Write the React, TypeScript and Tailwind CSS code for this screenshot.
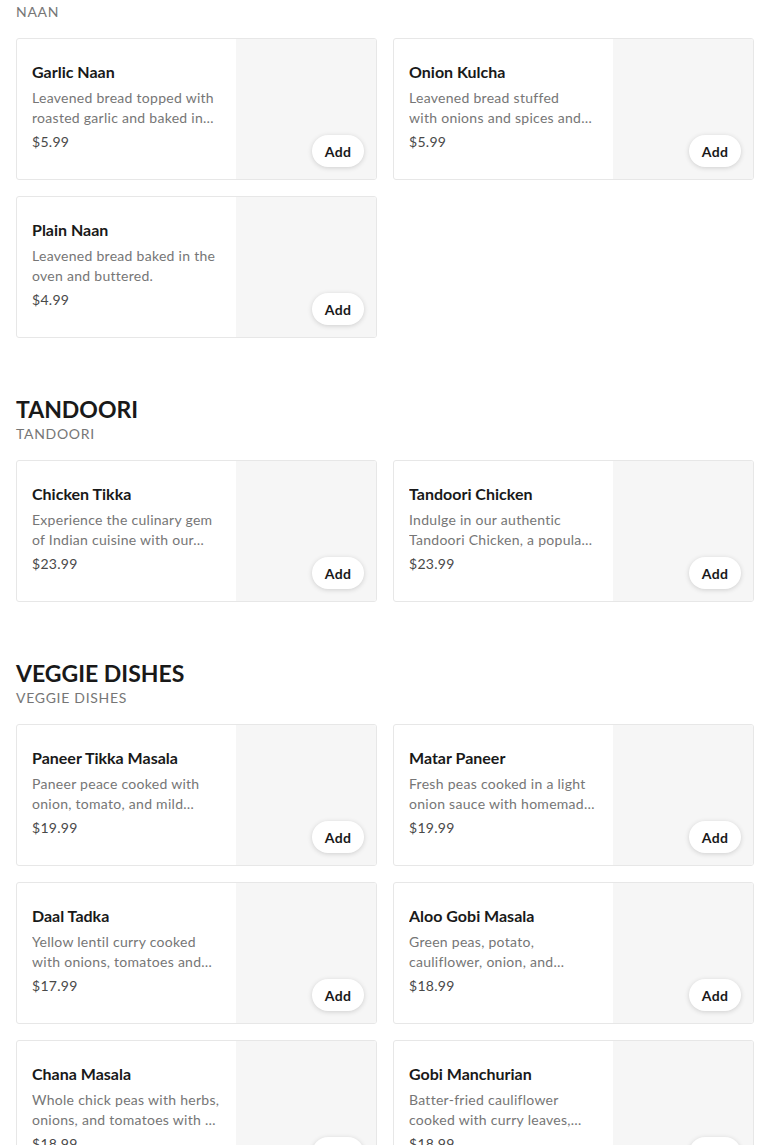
type Item = { name: string; lines: [string, string]; price: string };
type Section = { title: string; items: Item[] };

const sections: Section[] = [
  {
    title: "NAAN",
    items: [
      { name: "Garlic Naan", lines: ["Leavened bread topped with", "roasted garlic and baked in…"], price: "$5.99" },
      { name: "Onion Kulcha", lines: ["Leavened bread stuffed", "with onions and spices and…"], price: "$5.99" },
      { name: "Plain Naan", lines: ["Leavened bread baked in the", "oven and buttered."], price: "$4.99" },
    ],
  },
  {
    title: "TANDOORI",
    items: [
      { name: "Chicken Tikka", lines: ["Experience the culinary gem", "of Indian cuisine with our…"], price: "$23.99" },
      { name: "Tandoori Chicken", lines: ["Indulge in our authentic", "Tandoori Chicken, a popula…"], price: "$23.99" },
    ],
  },
  {
    title: "VEGGIE DISHES",
    items: [
      { name: "Paneer Tikka Masala", lines: ["Paneer peace cooked with", "onion, tomato, and mild…"], price: "$19.99" },
      { name: "Matar Paneer", lines: ["Fresh peas cooked in a light", "onion sauce with homemad…"], price: "$19.99" },
      { name: "Daal Tadka", lines: ["Yellow lentil curry cooked", "with onions, tomatoes and…"], price: "$17.99" },
      { name: "Aloo Gobi Masala", lines: ["Green peas, potato,", "cauliflower, onion, and…"], price: "$18.99" },
      { name: "Chana Masala", lines: ["Whole chick peas with herbs,", "onions, and tomatoes with …"], price: "$18.99" },
      { name: "Gobi Manchurian", lines: ["Batter-fried cauliflower", "cooked with curry leaves,…"], price: "$18.99" },
    ],
  },
];

function MenuCard({ item }: { item: Item }) {
  return (
    <div className="flex h-[142px] overflow-hidden rounded-[3px] border border-[#e7e7e7] bg-white">
      <div className="min-w-0 flex-1 pl-[15px] pr-4 pt-[21px]">
        <div className="truncate text-[16px] font-bold leading-6 text-[#191919]">{item.name}</div>
        <div className="mt-1 text-[14px] leading-5 tracking-[0.02em] text-[#767676]">
          <div className="truncate">{item.lines[0]}</div>
          <div className="truncate">{item.lines[1]}</div>
        </div>
        <div className="mt-1 text-[14px] leading-5 tracking-[0.02em] text-[#494949]">{item.price}</div>
      </div>
      <div className="flex w-[140px] shrink-0 items-end justify-end bg-[#f6f6f6] p-3">
        <button className="h-8 w-[52px] rounded-full bg-white text-[14px] font-bold tracking-[0.02em] text-[#191919] shadow-[0_1px_5px_rgba(0,0,0,0.16)]">
          Add
        </button>
      </div>
    </div>
  );
}

export default function App() {
  return (
    <div className="min-h-screen overflow-hidden bg-white px-4 font-['Lato',sans-serif]">
      {sections.map((s, i) => (
        <section key={s.title} className={i === 0 ? "-mt-[27px]" : "pt-[57px]"}>
          <h2 className="text-[23px] font-bold leading-7 text-[#191919]">{s.title}</h2>
          <div className="mt-[1px] text-[14px] leading-5 tracking-wider text-[#767676]">{s.title}</div>
          <div className="mt-4 grid grid-cols-2 gap-4">
            {s.items.map((it) => (
              <MenuCard key={it.name} item={it} />
            ))}
          </div>
        </section>
      ))}
    </div>
  );
}
